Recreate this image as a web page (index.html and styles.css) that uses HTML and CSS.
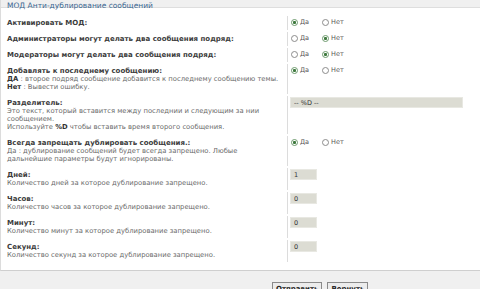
FILE: index.html
```html
<!DOCTYPE html>
<html lang="ru">
<head>
    <meta charset="UTF-8">
    <title>МОД Анти-дублирование сообщений</title>
    <link rel="stylesheet" href="styles.css">
</head>
<body>

    <div class="panel">
        <div class="panel-title">МОД Анти-дублирование сообщений</div>

        <div class="rows">
            <!-- Radio settings -->
            <div class="row">
                <div class="row-label"><b>Активировать МОД:</b></div>
                <div class="row-field">
                    <span class="option"><i class="radio checked"></i>Да</span>
                    <span class="option"><i class="radio"></i>Нет</span>
                </div>
            </div>
            <div class="row">
                <div class="row-label"><b>Администраторы могут делать два сообщения подряд:</b></div>
                <div class="row-field">
                    <span class="option"><i class="radio"></i>Да</span>
                    <span class="option"><i class="radio checked"></i>Нет</span>
                </div>
            </div>
            <div class="row">
                <div class="row-label"><b>Модераторы могут делать два сообщения подряд:</b></div>
                <div class="row-field">
                    <span class="option"><i class="radio"></i>Да</span>
                    <span class="option"><i class="radio checked"></i>Нет</span>
                </div>
            </div>
            <div class="row">
                <div class="row-label">
                    <b>Добавлять к последнему сообщению:</b>
                    <span class="desc"><b class="key">ДА</b> : второе подряд сообщение добавится к последнему сообщению темы.</span>
                    <span class="desc"><b class="key">Нет</b> : Вывести ошибку.</span>
                </div>
                <div class="row-field">
                    <span class="option"><i class="radio checked"></i>Да</span>
                    <span class="option"><i class="radio"></i>Нет</span>
                </div>
            </div>

            <!-- Separator -->
            <div class="row">
                <div class="row-label">
                    <b>Разделитель:</b>
                    <span class="desc">Это текст, который вставится между последнии и следующим за нии сообщением.</span>
                    <span class="desc">Используйте <b class="key">%D</b> чтобы вставить время второго сообщения.</span>
                </div>
                <div class="row-field">
                    <input class="text-wide" type="text" value="-- %D --">
                </div>
            </div>

            <div class="row">
                <div class="row-label">
                    <b>Всегда запрещать дублировать сообщения.:</b>
                    <span class="desc">Да : дублирование сообщений будет всегда запрещено. Любые дальнейшие параметры будут игнорированы.</span>
                </div>
                <div class="row-field">
                    <span class="option"><i class="radio checked"></i>Да</span>
                    <span class="option"><i class="radio"></i>Нет</span>
                </div>
            </div>

            <!-- Time limits -->
            <div class="row">
                <div class="row-label">
                    <b>Дней:</b>
                    <span class="desc">Количество дней за которое дублирование запрещено.</span>
                </div>
                <div class="row-field"><input class="text-small" type="text" value="1"></div>
            </div>
            <div class="row">
                <div class="row-label">
                    <b>Часов:</b>
                    <span class="desc">Количество часов за которое дублирование запрещено.</span>
                </div>
                <div class="row-field"><input class="text-small" type="text" value="0"></div>
            </div>
            <div class="row">
                <div class="row-label">
                    <b>Минут:</b>
                    <span class="desc">Количество минут за которое дублирование запрещено.</span>
                </div>
                <div class="row-field"><input class="text-small" type="text" value="0"></div>
            </div>
            <div class="row">
                <div class="row-label">
                    <b>Секунд:</b>
                    <span class="desc">Количество секунд за которое дублирование запрещено.</span>
                </div>
                <div class="row-field"><input class="text-small" type="text" value="0"></div>
            </div>
        </div>
    </div>

    <div class="buttons">
        <button type="submit">Отправить</button>
        <button type="reset">Вернуть</button>
    </div>

</body>
</html>
```

FILE: styles.css
```css
/* General page styling */
body {
    margin: 0;
    background-color: #ffffff;
    color: #444;
    font-family: "DejaVu Sans", Verdana, sans-serif;
    overflow: hidden;
}

/* Settings panel */
.panel {
    border-left: 1px solid #dcdcdc;
    border-bottom: 1px solid #cfcfcf;
    padding-bottom: 8px;
}

.panel-title {
    height: 7px;
    background-color: #f0f0f0;
    border-bottom: 1px solid #dedede;
    padding-left: 6px;
    color: #3a6690;
    font-size: 7.5px;
    line-height: 12px;
    white-space: nowrap;
}

.rows {
    display: flex;
    flex-direction: column;
    gap: 2px;
    padding-top: 8px;
}

.row {
    display: flex;
}

.row-label {
    width: 286px;
    flex-shrink: 0;
    box-sizing: border-box;
    padding: 3px 4px 3px 6px;
    font-size: 7px;
    line-height: 8px;
}

.row-label b {
    color: #3c3c3c;
}

.desc {
    display: block;
    color: #6a6a6a;
    font-size: 6.8px;
}

.desc .key {
    color: #333;
}

.row-field {
    flex: 1;
    border-left: 1px solid #dcdcdc;
    padding: 1px 0 0 2px;
    display: flex;
    align-items: flex-start;
}

/* Radio buttons */
.option {
    display: flex;
    align-items: center;
    width: 31px;
    margin-top: 1px;
    font-size: 6.5px;
    line-height: 8px;
    color: #555;
}

.radio {
    width: 5px;
    height: 5px;
    margin: 0 2px 0 1px;
    border: 1px solid #8c8c8c;
    border-radius: 50%;
    background-color: #fff;
    flex-shrink: 0;
}

.radio.checked {
    border-color: #6d9a6d;
    background: radial-gradient(circle, #3f7a3f 0 1.3px, #fff 1.8px);
}

/* Text inputs */
input {
    box-sizing: border-box;
    height: 11px;
    padding: 0 3px;
    border: 1px solid #e8e8e2;
    background-color: #dcdcd3;
    color: #333;
    font-family: "DejaVu Sans", Verdana, sans-serif;
    font-size: 6.5px;
}

.text-wide {
    width: 173px;
}

.text-small {
    width: 27px;
}

/* Bottom buttons */
.buttons {
    background-color: #f0f0f0;
    height: 40px;
    padding: 11px 0 0 272px;
    display: flex;
    align-items: flex-start;
    gap: 5px;
}

button {
    height: 14px;
    padding: 0 3px;
    border: 1px solid #8a8a8a;
    background-color: #ececec;
    color: #222;
    font-family: "DejaVu Sans", Verdana, sans-serif;
    font-size: 7px;
    font-weight: bold;
    line-height: 10px;
}
```
